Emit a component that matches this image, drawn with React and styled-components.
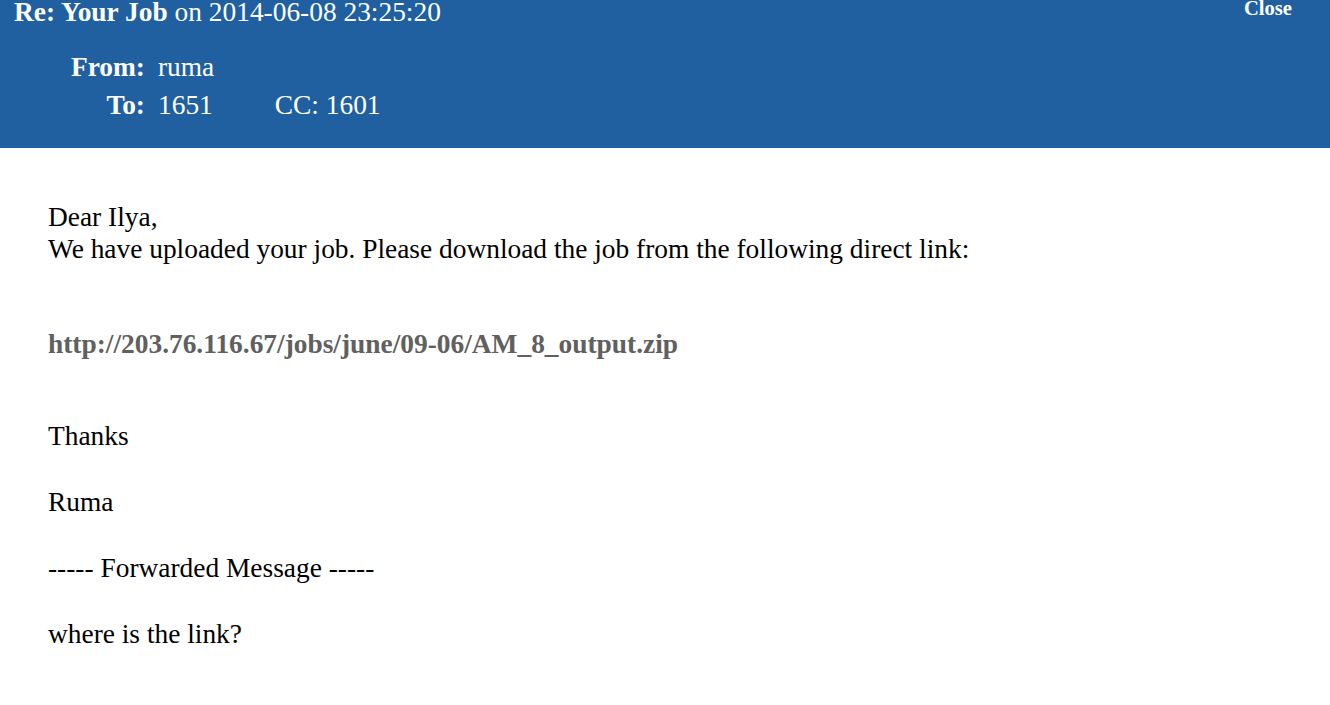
import React from "react";
import styled, { createGlobalStyle } from "styled-components";

const Global = createGlobalStyle`
  html, body { margin: 0; padding: 0; background: #ffffff; }
  body { font-family: "Liberation Serif", "Times New Roman", serif; color: #000; }
`;

const Header = styled.header`
  background: #2060a0;
  color: #ffffff;
  height: 148px;
  box-sizing: border-box;
  padding: 0 38px 0 14px;
  overflow: hidden;
`;

const TitleRow = styled.div`
  display: flex;
  justify-content: space-between;
  align-items: flex-start;
  margin-top: -3px;
`;

const Title = styled.h1`
  margin: 0;
  font-size: 27.4px;
  font-weight: normal;
  line-height: 31.5px;
  b { font-weight: bold; }
`;

const Close = styled.a`
  margin-top: -1px;
  font-size: 20.6px;
  font-weight: bold;
  line-height: 24px;
  color: #ffffff;
  cursor: pointer;
`;

const Meta = styled.div`
  display: grid;
  grid-template-columns: 131px auto;
  column-gap: 13px;
  row-gap: 6.5px;
  margin-top: 23.5px;
  font-size: 27.4px;
  line-height: 31.5px;
  justify-content: start;
`;

const Label = styled.span`
  font-weight: bold;
  text-align: right;
`;

const Value = styled.span`
  display: flex;
  gap: 62px;
`;

const Body = styled.main`
  padding: 54px 48px 0;
  font-size: 27.4px;
  line-height: 31.5px;
`;

const Para = styled.p`
  margin: ${(p) => p.$top || 0}px 0 0;
`;

const Link = styled.a`
  color: #606060;
  font-weight: bold;
  text-decoration: none;
`;

export default function App() {
  return (
    <>
      <Global />
      <Header>
        <TitleRow>
          <Title>
            <b>Re: Your Job</b> on 2014-06-08 23:25:20
          </Title>
          <Close>Close</Close>
        </TitleRow>
        <Meta>
          <Label>From:</Label>
          <Value>ruma</Value>
          <Label>To:</Label>
          <Value>
            <span>1651</span>
            <span>CC: 1601</span>
          </Value>
        </Meta>
      </Header>
      <Body>
        <Para>
          Dear Ilya,
          <br />
          We have uploaded your job. Please download the job from the following direct link:
        </Para>
        <Para $top={64}>
          <Link>http://203.76.116.67/jobs/june/09-06/AM_8_output.zip</Link>
        </Para>
        <Para $top={60.5}>Thanks</Para>
        <Para $top={34.5}>Ruma</Para>
        <Para $top={34.5}>----- Forwarded Message -----</Para>
        <Para $top={34.5}>where is the link?</Para>
      </Body>
    </>
  );
}
